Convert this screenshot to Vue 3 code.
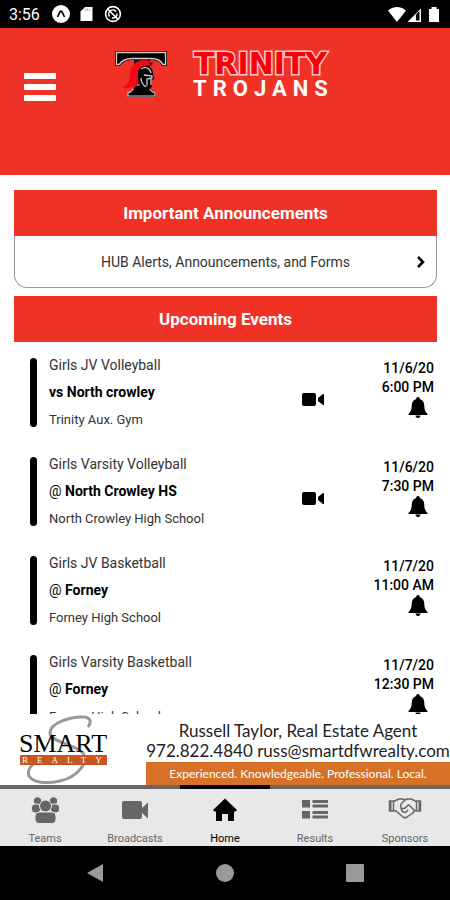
<script setup>
import { ref } from 'vue'

const events = [
  { id: 1, team: 'Girls JV Volleyball', versus: 'vs', opponent: 'North crowley', venue: 'Trinity Aux. Gym', date: '11/6/20', time: '6:00 PM', video: true },
  { id: 2, team: 'Girls Varsity Volleyball', versus: '@', opponent: 'North Crowley HS', venue: 'North Crowley High School', date: '11/6/20', time: '7:30 PM', video: true },
  { id: 3, team: 'Girls JV Basketball', versus: '@', opponent: 'Forney', venue: 'Forney High School', date: '11/7/20', time: '11:00 AM', video: false },
  { id: 4, team: 'Girls Varsity Basketball', versus: '@', opponent: 'Forney', venue: 'Forney High School', date: '11/7/20', time: '12:30 PM', video: false }
]

const tabs = ['Teams', 'Broadcasts', 'Home', 'Results', 'Sponsors']
const activeTab = ref('Home')
</script>

<template>
  <div class="app">
    <div class="status-bar">
      <span class="clock">3:56</span>
      <svg class="status-icon" viewBox="0 0 18 18" aria-hidden="true">
        <circle cx="9" cy="9" r="9" fill="#fff" />
        <path d="M5.5 12 8.2 6.3h1.6l2.7 5.7" fill="none" stroke="#000" stroke-width="1.7" />
      </svg>
      <svg class="status-icon" viewBox="0 0 18 18" aria-hidden="true">
        <path d="M7 2h7.5v14h-12V6.5z" fill="#fff" />
        <path d="M7.2 3.5v2.5M9.4 3.5v2.5M11.6 3.5v2.5" stroke="#999" stroke-width="0.8" />
      </svg>
      <svg class="status-icon" viewBox="0 0 18 18" aria-hidden="true">
        <g fill="none" stroke="#fff">
          <circle cx="9" cy="9" r="7.4" stroke-width="1.6" />
          <path d="M5.5 11.500a4 4 0 0 1 6.500-4.800M13 8.500a4 4 0 0 1-5 4.300" stroke-width="1.5" />
          <path d="M3.8 4.2 14 14.2" stroke-width="1.6" />
        </g>
      </svg>
      <svg class="signals" viewBox="0 0 54 18" aria-hidden="true">
        <path d="M0 5.5C5 .8 13 .8 18 5.5L9 17z" fill="#fff" />
        <path d="M19.5 17 33 3.5V17z" fill="#fff" />
        <path d="M28 9.5 31.5 6v9.500H28z" fill="#000" />
        <path d="M41 4h2.500V2h5v2H51v13H41z" fill="#fff" />
      </svg>
    </div>

    <header class="header">
      <button class="menu" aria-label="Open menu"><i /><i /><i /></button>
      <div class="brand">
        <svg class="crest" viewBox="0 0 54 48" aria-hidden="true">
          <path d="M1 1h52v15h-5c-2-4-5-6-12-6v24c0 5 2 7 6 9v4H14v-4c4-2 6-4 6-9V10c-8 0-11 2-14 6H1z" fill="#111" />
          <path d="M2.500 2.500h49v12H49c-2-4-6-6-12-6H18c-6 0-10 2-13 6H2.500z" fill="#000" stroke="#ccc" stroke-width="1.300" />
          <path d="M20 35h15c0 5 3 7 6 8v3H14v-3c3-1 6-3 6-8z" fill="#000" stroke="#ccc" stroke-width="1.200" />
          <path d="M39 13c-4-3-10-4-14-2-6 2-9 7-9 13 0 6-2 10-8 14 5 1 8 0 10-2l1 3c4-3 6-7 7-12l3-9c2-2 5-3 9-2z" fill="#f00a12" />
          <path d="M24 25c-1-6 3-9 8-9 4 0 7 3 7 7l1 6-2 1v7l-5 4-4-2-4 2c2-4 1-8-1-11z" fill="#000" />
          <path d="M27 19c4-3 9-1 10 4M30 25l8 1v2l-5 1v7m4-8v7m-10-7c0 4 2 7 5 9" fill="none" stroke="#ccc" stroke-width="1.300" />
          <path d="m35 13 4-1-2 4" fill="#111" />
        </svg>
        <div class="wordmark">
          <span class="school">TRINITY</span>
          <span class="mascot">TROJANS</span>
        </div>
      </div>
    </header>

    <main class="content">
      <section class="announcements">
        <h2 class="section-title">Important Announcements</h2>
        <button class="announcement">
          <span>HUB Alerts, Announcements, and Forms</span>
          <svg class="chevron" viewBox="0 0 10 14" aria-hidden="true">
            <path d="m2 2 5 5-5 5" fill="none" stroke="#000" stroke-width="2.600" />
          </svg>
        </button>
      </section>

      <section>
        <h2 class="section-title">Upcoming Events</h2>
        <ul class="events">
          <li v-for="event in events" :key="event.id" class="event">
            <span class="marker" />
            <div class="info">
              <p class="team">{{ event.team }}</p>
              <p class="opponent"><span :class="{ at: event.versus === '@' }">{{ event.versus }}</span> {{ event.opponent }}</p>
              <p class="venue">{{ event.venue }}</p>
            </div>
            <svg v-if="event.video" class="video" viewBox="0 0 22 14" role="img" aria-label="Video broadcast">
              <rect width="14" height="13" rx="2" />
              <path d="M22 1v11h-1l-5-4V5l5-4z" />
            </svg>
            <div class="when">
              <time>{{ event.date }}</time>
              <time>{{ event.time }}</time>
              <button class="bell" aria-label="Set reminder">
                <svg viewBox="0 0 20 21" aria-hidden="true">
                  <path d="M10 0c1.200 0 1.800.8 1.800 2 3 .8 4.500 3.300 4.500 7 0 4 1.200 6 3.200 8v1H.500v-1c2-2 3.200-4 3.200-8 0-3.700 1.500-6.200 4.500-7C8.200.8 8.800 0 10 0zM7.500 18.500h5c0 1.500-1 2.500-2.500 2.500s-2.500-1-2.500-2.500z" />
                </svg>
              </button>
            </div>
          </li>
        </ul>
      </section>
    </main>

    <aside class="sponsor">
      <svg class="realty" viewBox="0 0 94 71" role="img" aria-label="Smart Realty">
        <path d="M68 13c3-4 4-9-4-10-13-1-34 6-34 16 0 9 27 12 33 20 6 9-5 24-23 28-13 3-27 2-31-5-3-8 6-16 20-18" fill="none" stroke="#999" stroke-width="3" />
        <text x="-1" y="38" class="realty-name">SMART</text>
        <rect x="0" y="41" width="87" height="10" fill="#c9561f" />
        <text x="2" y="49" class="realty-type">REALTY</text>
      </svg>
      <div class="agent">
        <p>Russell Taylor, Real Estate Agent</p>
        <p>972.822.4840 russ@smartdfwrealty.com</p>
        <p class="tagline">Experienced. Knowledgeable. Professional. Local.</p>
      </div>
    </aside>

    <nav class="tabs">
      <button
        v-for="tab in tabs"
        :key="tab"
        class="tab"
        :class="{ active: tab === activeTab }"
        @click="activeTab = tab"
      >
        <svg v-if="tab === 'Teams'" viewBox="0 0 34 28" aria-hidden="true">
          <g stroke="#e8e8e8" stroke-width="1">
            <circle cx="9.5" cy="5" r="4.2" /><circle cx="25.5" cy="5" r="4.2" />
            <rect x="3.5" y="8" width="9" height="9" rx="3.500" /><rect x="22.5" y="8" width="9" height="9" rx="3.500" />
            <circle cx="17.5" cy="10" r="6" /><rect x="7" y="16" width="21" height="11.500" rx="4" />
          </g>
        </svg>
        <svg v-else-if="tab === 'Broadcasts'" viewBox="0 0 34 28" aria-hidden="true">
          <path d="M6 5h16q2 0 2 2v5l6-5.500v16L24 17v4q0 2-2 2H6q-2 0-2-2V7q0-2 2-2z" />
        </svg>
        <svg v-else-if="tab === 'Home'" viewBox="0 0 34 28" aria-hidden="true">
          <path d="M17 2.500 29 14l-1.500 1.500H26V25h-6v-7h-6v7H8v-9.500H6.500L5 14z" />
        </svg>
        <svg v-else-if="tab === 'Results'" viewBox="0 0 34 28" aria-hidden="true">
          <path d="M4 4h8v7.500H4zM14.500 4H30v3H14.500zM14.500 8.500H30v3H14.500zM4 15h8v7.500H4zM14.500 15H30v3H14.500zM14.500 19.500H30v3H14.500z" />
        </svg>
        <svg v-else viewBox="0 0 34 28" aria-hidden="true">
          <g fill="none" stroke="currentColor" stroke-width="1.500" stroke-linejoin="round">
            <path d="M1.500 5h4v10h-4zM28.500 5h4v10h-4z" />
            <path d="M5.500 5.500 11 3h4l2 1 2-1h4l5.500 2.500M5.500 14.500 8 15l7 6 2 1 2-1 6-4 1.500-2.500h2M17 4l-4 4c-1 3 0 5 3 4.500s3-4 5-3.500l5 5M13 11c0 4 2 6 5 5l2-2" />
          </g>
          <path d="M1 5h2.500v10H1zM30.500 5H33v10h-2.500z" />
        </svg>
        <span>{{ tab }}</span>
      </button>
    </nav>

    <div class="system-nav">
      <button aria-label="Back">
        <svg viewBox="0 0 20 20" aria-hidden="true"><path d="M18 1v18L2 10z" /></svg>
      </button>
      <button aria-label="Home screen">
        <svg viewBox="0 0 20 20" aria-hidden="true"><circle cx="10" cy="10" r="9" /></svg>
      </button>
      <button aria-label="Recent apps">
        <svg viewBox="0 0 20 20" aria-hidden="true"><rect x="1" y="1" width="18" height="18" rx="1" /></svg>
      </button>
    </div>
  </div>
</template>

<style>
body {
  margin: 0;
  background: #fff;
}
</style>

<style scoped>
.app {
  display: flex;
  flex-direction: column;
  height: 100vh;
  background: #fff;
  color: #000;
  font-family: Roboto, sans-serif;
}

button {
  margin: 0;
  padding: 0;
  border: 0;
  background: none;
  color: inherit;
  font: inherit;
  cursor: pointer;
}

h2,
p {
  margin: 0;
}

svg {
  display: block;
}

.status-bar {
  display: flex;
  align-items: center;
  flex: none;
  gap: 8px;
  height: 28px;
  padding: 0 8px 0 9px;
  background: #000;
  color: #fff;
}

.clock {
  margin-right: 4px;
  font-size: 16px;
}

.status-icon {
  width: 18px;
  height: 18px;
}

.signals {
  width: 54px;
  height: 18px;
  margin-left: auto;
}

.header {
  display: grid;
  grid-template-columns: 32px 1fr 22px;
  align-items: start;
  flex: none;
  box-sizing: border-box;
  height: 147px;
  padding: 22px 24px;
  background: #f03226;
  color: #fff;
}

.menu {
  display: flex;
  flex-direction: column;
  gap: 5px;
  padding-top: 23px;
}

.menu i {
  width: 32px;
  height: 6px;
  border-radius: 1px;
  background: #fff;
}

.brand {
  display: flex;
  justify-content: center;
  gap: 7px;
}

.crest {
  width: 54px;
  height: 48px;
}

.wordmark {
  display: flex;
  flex-direction: column;
  align-items: center;
  width: 172px;
}

.school {
  color: #f5000c;
  font-family: 'DejaVu Sans', sans-serif;
  font-size: 30px;
  font-weight: 700;
  line-height: 28px;
  -webkit-text-stroke: 3px #ffc9c4;
  paint-order: stroke fill;
}

.mascot {
  padding-left: 6px;
  font-size: 22px;
  font-weight: 700;
  line-height: 22px;
  letter-spacing: 6px;
}

.content {
  flex: 1;
  min-height: 0;
  padding: 15px 13px 0 14px;
  overflow: hidden;
}

.announcements {
  margin-bottom: 8px;
}

.section-title {
  background: #f03226;
  color: #fff;
  font-size: 17px;
  font-weight: 700;
  line-height: 46px;
  text-align: center;
}

.announcement {
  display: flex;
  align-items: center;
  width: 100%;
  height: 52px;
  padding: 0 10px 0 20px;
  border: 1px solid #999;
  border-top: 0;
  border-radius: 0 0 13px 13px;
  color: #333;
  font-size: 14px;
}

.announcement span {
  flex: 1;
}

.chevron {
  width: 10px;
  height: 14px;
}

.events {
  display: flex;
  flex-direction: column;
  gap: 18px;
  margin: 0;
  padding: 10px 3px 0 16px;
  list-style: none;
}

.event {
  display: flex;
  align-items: center;
}

.marker {
  width: 7px;
  height: 69px;
  margin-right: 12px;
  border-radius: 4px;
  background: #000;
}

.info {
  flex: 1;
  font-size: 14px;
  line-height: 27px;
}

.team {
  color: #333;
}

.opponent {
  font-weight: 700;
}

.at {
  font-weight: 400;
}

.venue {
  color: #333;
  font-size: 13px;
}

.video {
  width: 22px;
  height: 14px;
  margin-top: 14px;
}

.when {
  display: flex;
  flex-direction: column;
  align-items: flex-end;
  align-self: flex-start;
  width: 110px;
  padding-top: 7px;
  font-size: 14px;
  font-weight: 500;
  line-height: 19px;
}

.bell {
  margin-right: 6px;
}

.bell svg {
  width: 20px;
  height: 21px;
}

.sponsor {
  display: flex;
  justify-content: space-between;
  flex: none;
  height: 71px;
  padding-left: 20px;
  background: #fff;
}

.realty {
  width: 94px;
  height: 71px;
}

.realty-name {
  font-family: 'Liberation Serif', serif;
  font-size: 26px;
}

.realty-type {
  fill: #fff;
  font-family: 'Liberation Serif', serif;
  font-size: 9px;
  letter-spacing: 9px;
}

.agent {
  display: flex;
  flex-direction: column;
  width: 304px;
  padding-top: 7px;
  color: #222;
  font-family: Lato, sans-serif;
  font-size: 17px;
  line-height: 20px;
  text-align: center;
  white-space: nowrap;
}

.tagline {
  margin-top: auto;
  background: #d67127;
  color: #fff;
  font-size: 12px;
  line-height: 23px;
}

.tabs {
  display: grid;
  grid-template-columns: repeat(5, 1fr);
  flex: none;
  background: #e8e8e8;
}

.tab {
  display: flex;
  flex-direction: column;
  align-items: center;
  height: 61px;
  padding-top: 7px;
  border-top: 4px solid #6b6665;
  color: #666;
  fill: currentColor;
  font-size: 11px;
  line-height: 14px;
}

.tab svg {
  width: 34px;
  height: 28px;
  margin-bottom: 8px;
}

.tab.active {
  border-color: #000;
  color: #000;
}

.system-nav {
  display: flex;
  justify-content: space-around;
  flex: none;
  height: 54px;
  padding: 0 30px;
  background: #000;
  fill: #999;
}

.system-nav svg {
  width: 20px;
  height: 20px;
}
</style>
